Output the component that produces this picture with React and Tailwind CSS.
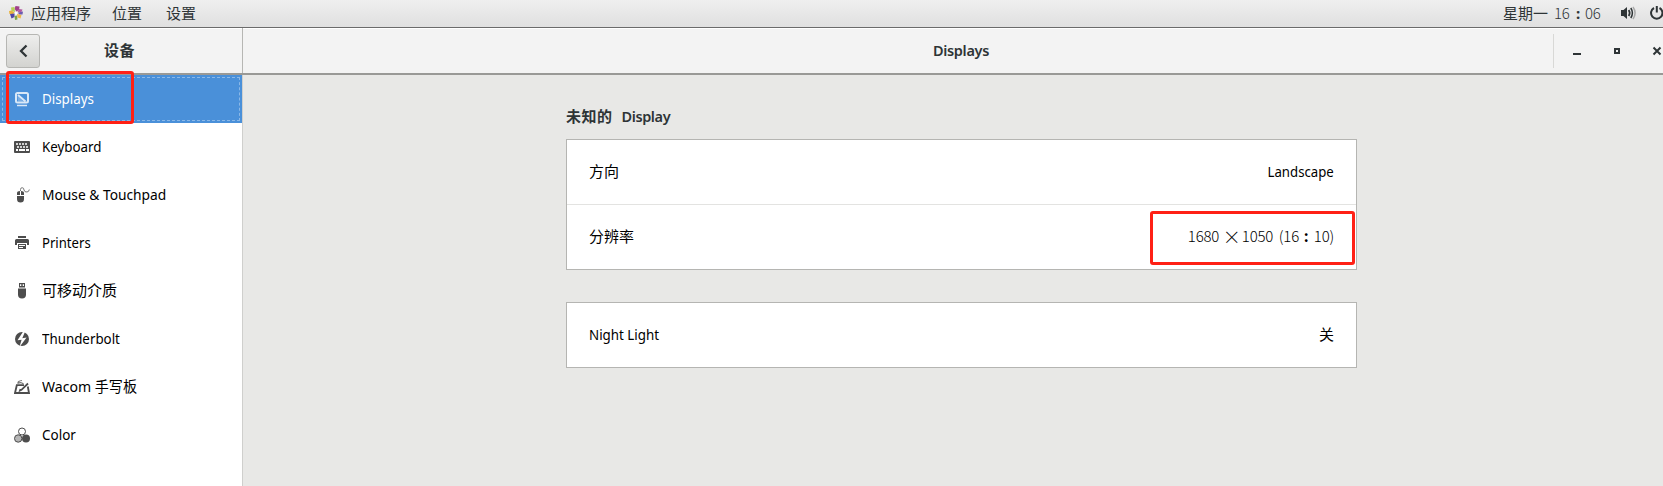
const ICON = 'block h-4 w-4 shrink-0';

function DisplayIcon() {
  return (
    <svg className={ICON} viewBox="0 0 16 16" fill="none" stroke="currentColor" opacity=".8">
      <rect x="2" y="2" width="12" height="9.500" rx="1.500" strokeWidth="2" />
      <path d="M4 4L11.500 10.500" strokeWidth="2" />
      <path d="M3.500 5L9.500 10.500H4Z" fill="currentColor" stroke="none" opacity=".35" />
      <path d="M3 14.500H13" strokeWidth="1.500" />
    </svg>
  );
}

function KeyboardIcon() {
  return (
    <svg className={ICON} viewBox="0 0 16 16">
      <rect x="0" y="2" width="16" height="12" rx="1" fill="#4d4d4d" />
      <path d="M2 5h2M5 5h2M8 5h2M11 5h2M3 8h2M6 8h2M9 8h2M12 8h2M2 11h2M5 11h6M12 11h3" stroke="#fff" strokeWidth="2" />
      <path d="M2 5h12M3 8h11" stroke="#4d4d4d" strokeWidth=".5" />
    </svg>
  );
}

function MouseIcon() {
  return (
    <svg className={ICON} viewBox="0 0 16 16" fill="#4d4d4d">
      <path d="M3 8V6Q3 4 6 4V8ZM7 4Q10 4 10 6V8H7ZM3 9H10V12Q10 15.500 6.500 15.500T3 12Z" />
      <path d="M6.500 4V2.500Q6.500.7 8.200.7T10 3Q10.500 5.300 13 5Q15 4.800 15.300 2.500" fill="none" stroke="#777" />
    </svg>
  );
}

function PrinterIcon() {
  return (
    <svg className={ICON} viewBox="0 0 16 16" fill="#4d4d4d">
      <path d="M4 1H12V3H4ZM2.500 4H13.500Q15 4 15 5.500V10H13V8H3V10H1V5.500Q1 4 2.500 4Z" />
      <path fillRule="evenodd" d="M4 9H12V14H4ZM5 10V11H11V10ZM5 12V13H9V12Z" />
    </svg>
  );
}

function UsbIcon() {
  return (
    <svg className={ICON} viewBox="0 0 16 16" fill="#4d4d4d">
      <path fillRule="evenodd" d="M5 0H11V4.500H5ZM6 1.300V3H7.300V1.300ZM8.700 1.300V3H10V1.300Z" />
      <path d="M4 5.500H12V11.500Q12 15.500 8 15.500T4 11.500Z" />
    </svg>
  );
}

function ThunderboltIcon() {
  return (
    <svg className={ICON} viewBox="0 0 16 16">
      <circle cx="8" cy="8" r="7" fill="#4d4d4d" />
      <path d="M9.500 0L3.500 9.300L7.600 8.800L5.500 16L12.600 6.500L8.300 7.200L11.300 0Z" fill="#fff" />
    </svg>
  );
}

function TabletIcon() {
  return (
    <svg className={ICON} viewBox="0 0 16 16" fill="none" stroke="#4d4d4d">
      <path d="M10 6.200H2.800L1 14H15L13.800 7.500" strokeWidth="1.800" />
      <path d="M14 4.500L7.500 10.800L6 11.500L6.500 10" strokeWidth="1.800" />
      <path d="M9.500 5Q7 2.500 4 4.200Q3.500 2 8 1.500" strokeWidth="1.200" stroke="#777" />
    </svg>
  );
}

function ColorIcon() {
  return (
    <svg className={ICON} viewBox="0 0 16 16">
      <circle cx="8" cy="4.500" r="3.500" fill="#fff" stroke="#4d4d4d" />
      <circle cx="4.200" cy="11.500" r="3.700" fill="#b5b5b5" stroke="#4d4d4d" />
      <circle cx="12" cy="11.500" r="4" fill="#4d4d4d" />
    </svg>
  );
}

const ITEMS = [
  { label: 'Keyboard', Icon: KeyboardIcon, fit: 'scale-x-[0.92]' },
  { label: 'Mouse & Touchpad', Icon: MouseIcon, fit: 'scale-x-[0.95]' },
  { label: 'Printers', Icon: PrinterIcon, fit: 'scale-x-[0.905]' },
  { label: '可移动介质', Icon: UsbIcon, fit: 'text-[15px]' },
  { label: 'Thunderbolt', Icon: ThunderboltIcon, fit: 'scale-x-[0.92]' },
  { label: 'Wacom 手写板', Icon: TabletIcon, fit: 'scale-x-[0.97]' },
  { label: 'Color', Icon: ColorIcon, fit: 'scale-x-[0.93]' },
];

function TopBar() {
  return (
    <div className="flex h-7 items-center border-b border-[#6b6b6b] bg-linear-to-b from-[#efefef] to-[#e0e0e0] pb-0.5 pl-[8px] text-[#2e3436]">
      <svg className="mt-px block h-4 w-4" viewBox="0 0 16 16">
        <path d="M7.500 1L11.500 1.500L11 5L8.500 6.500L6.500 4Z" fill="#a1408c" />
        <path d="M3 2.500L6.500 2L7 7L3.500 6Z" fill="#b6cf5b" />
        <path d="M11 4L14.500 4.500L13.500 7L9.500 7Z" fill="#b45aa0" />
        <path d="M1 6L3.500 5.500L6.500 7.500L5 9L1.500 9Z" fill="#e9b13b" />
        <path d="M10 7.500L15 6.500L14.500 9.500L11 9.500Z" fill="#6d5bb0" />
        <path d="M2 9L6.500 8.500L6.500 12L3.500 13.500Z" fill="#5147a5" />
        <path d="M9 9L13.500 10L12.500 13.500L9.500 12.500Z" fill="#f0b648" />
        <path d="M6.500 11L9 10.500L9.500 14.500L7 15Z" fill="#7fa649" />
        <path d="M7 7H9V9.500H7Z" fill="#fff" />
      </svg>
      <span className="ml-[7px] w-[81px]">应用程序</span>
      <span className="w-[54px]">位置</span>
      <span>设置</span>
      <div className="ml-auto flex items-center">
        <span className="w-[51px]">星期一</span>
        <span className="w-[22px] font-['Noto_Sans_CJK_SC'] font-light tracking-[-0.3px]">16</span>
        <span className="w-[9px] font-bold">:</span>
        <span className="w-[35px] font-['Noto_Sans_CJK_SC'] font-light tracking-[-0.2px]">06</span>
        <svg className="mt-px block h-4 w-4" viewBox="0 0 16 16" fill="none" stroke="#2e3436">
          <path d="M1 5H3.500L7 2V14L3.500 11H1Z" fill="#2e3436" stroke="none" />
          <path d="M8.700 5Q10.700 8 8.700 11" strokeWidth="1.700" />
          <path d="M10.800 3Q14 8 10.800 13" strokeWidth="1.500" />
          <path d="M13 2Q17.200 8 13 14" strokeWidth="1.500" stroke="#aaa" />
        </svg>
        <svg className="ml-[13px] mt-px block h-4 w-[14px]" viewBox="0 0 14 16" fill="none" stroke="#2e3436" strokeWidth="2">
          <path d="M5 3A5.700 5.700 0 1 0 10.500 3M7.800 1V7.500" />
        </svg>
      </div>
    </div>
  );
}

function Header() {
  return (
    <div className="flex h-[47px] border-b-2 border-[#999996] bg-[#f3f3f3] font-bold text-[#2e3436] shadow-[inset_0_1px_#fff]">
      <div className="flex w-[243px] items-center border-r border-[#b6b6b3] pl-1.5">
        <div className="flex h-[34px] w-[34px] items-center justify-center rounded-[3px] border border-[#b6b6b3] bg-linear-to-b from-[#eeeeed] to-[#d3d3d0]">
          <svg className="block h-4 w-4" viewBox="0 0 16 16" fill="none" stroke="#2e3436" strokeWidth="2.300">
            <path d="M11.500 2.500L6 8L11.500 13.500" />
          </svg>
        </div>
        <span className="mb-0.5 ml-16 tracking-[0.5px]">设备</span>
      </div>
      <div className="flex flex-1 items-center">
        <span className="mb-0.5 flex-1 pl-[126px] text-center text-[14.5px] font-semibold tracking-[-0.3px]">Displays</span>
        <div className="flex h-[34px] w-[110px] items-center border-l border-[#d8d8d6]">
          <svg className="block h-4 w-[109px]" viewBox="0 0 109 16" fill="none" stroke="#2e3436" strokeWidth="2">
            <path d="M19 11H27" />
            <rect x="61" y="6" width="4" height="4" />
            <path d="M99.500 4.500L106.500 11.500M106.500 4.500L99.500 11.500" />
          </svg>
        </div>
      </div>
    </div>
  );
}

function Row({ label, children }) {
  return (
    <div className="flex h-16 items-center justify-between px-[22px] pb-0.5">
      <span>{label}</span>
      {children}
    </div>
  );
}

export default function App() {
  return (
    <div className="flex h-[486px] w-[1663px] flex-col overflow-hidden bg-[#e8e8e6] font-['Noto_Sans','Noto_Sans_CJK_SC',sans-serif] text-[15px] leading-5 text-black">
      <TopBar />
      <Header />
      <div className="flex min-h-0 flex-1">
        <div className="w-[243px] border-r border-[#cfcfcd] bg-white text-[14.5px]">
          <div className="relative flex h-12 items-center bg-[#4a90d9] pl-[14px] text-white">
            <DisplayIcon />
            <span className="mb-0.5 ml-3 origin-left scale-x-[0.92]">Displays</span>
            <div className="absolute inset-x-[2px] inset-y-[2px] border border-dashed border-[#8bb8e7]" />
            <div className="absolute -top-1 left-1.5 z-10 h-[53px] w-32 rounded-[3px] border-3 border-[#ff2015]" />
          </div>
          {ITEMS.map(({ label, Icon, fit }) => (
            <div key={label} className="flex h-12 items-center pl-[14px]">
              <Icon />
              <span className={`mb-[3px] ml-3 origin-left ${fit}`}>{label}</span>
            </div>
          ))}
        </div>
        <div className="flex-1 pl-[323px] pt-[31px]">
          <div className="flex gap-[9px] font-bold text-[#2e3436]">
            <span className="tracking-[0.5px]">未知的</span>
            <span className="text-[14.5px] font-semibold tracking-[-0.4px]">Display</span>
          </div>
          <div className="mt-[13px] w-[791px] border border-[#b5b5b2] bg-white">
            <Row label="方向"><span className="origin-right scale-x-[0.91] text-[14.5px]">Landscape</span></Row>
            <div className="relative border-t border-[#e3e3e1]">
              <Row label="分辨率">
                <span className="flex font-['Noto_Sans_CJK_SC'] font-light tracking-[-0.2px]">
                  <span className="w-[35px]">1680</span>
                  <span className="w-[19px] text-[18px]">×</span>
                  <span className="w-[37px]">1050</span>
                  <span className="w-[25px]">(16</span>
                  <span className="w-[10px] font-bold">:</span>
                  <span>10)</span>
                </span>
              </Row>
              <div className="absolute right-px top-1.5 h-[54px] w-[205px] rounded-[3px] border-3 border-[#ff2015]" />
            </div>
          </div>
          <div className="mt-8 w-[791px] border border-[#b5b5b2] bg-white">
            <Row label={<span className="inline-block origin-left scale-x-[0.92] text-[14.5px]">Night Light</span>}><span>关</span></Row>
          </div>
        </div>
      </div>
    </div>
  );
}
